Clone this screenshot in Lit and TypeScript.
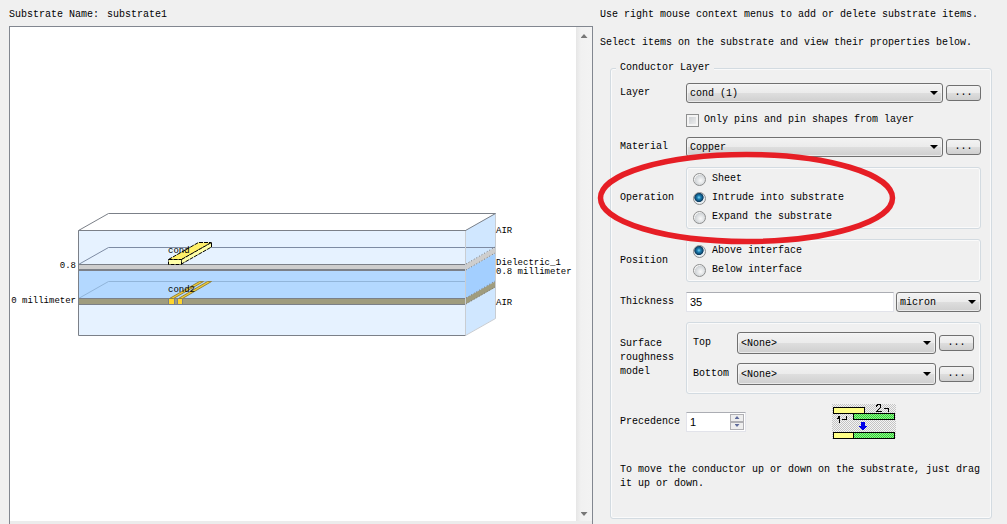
import { LitElement, html, css, svg } from "lit";
import { customElement } from "lit/decorators.js";

@customElement("substrate-view")
class SubstrateView extends LitElement {
  static styles = css`
    :host { display: flex; min-width: 0; min-height: 0; }
    .drawing { display: block; flex: 1; min-width: 0; width: 100%; height: 100%; background: #fff; }
    .label { font: 9px "Liberation Mono", monospace; fill: #000; }
    .end { text-anchor: end; }
    .edge { stroke: #7b8088; fill: none; }
    .back { stroke: #7d8ba3; fill: none; }
    .deep { stroke: #91b5da; fill: none; }
    .side-edge { stroke: #c9cdd2; fill: none; }
    .dots { stroke: #777; stroke-dasharray: 1 2; fill: none; }
    .dash { stroke: #000; stroke-dasharray: 4 1; }
    .strip { fill: #f5ce33; stroke: #93833f; }
  `;

  render() {
    return html`
      <svg class="drawing" viewBox="10 27 566 494" role="img" aria-label="Substrate cross-section">
        ${svg`
        <rect x="78" y="230" width="388" height="34" fill="#e6f2ff"/>
        <rect x="78" y="264" width="388" height="6" fill="#cecece"/>
        <rect x="78" y="270" width="388" height="28" fill="#b3d8ff"/>
        <rect x="78" y="298" width="388" height="6" fill="#9f9c7e"/>
        <rect x="78" y="304" width="388" height="31" fill="#e6f2ff"/>
        <path d="M466 230 496 213V318L466 335Z" fill="#d0e7ff"/>
        <path d="M466 264 496 247V253L466 270Z" fill="#cecece"/>
        <path d="M466 270 496 253V281L466 298Z" fill="#a3cfff"/>
        <path d="M466 298 496 281V287L466 304Z" fill="#9f9c7e"/>
        <path class="edge" d="M78.5 230.5 108.5 213.5H495.5L465.5 230.5"/>
        <path class="back" d="M78.5 264.5 108.5 247.5H495"/>
        <path class="deep" d="M78.5 298.5 108.5 281.5H466"/>
        <path class="edge" d="M466 230.5H78.5V335.5H466M78.5 264.5H466M78.5 298.5H466M78.5 304.5H466"/>
        <path class="edge" stroke-width="2" d="M78 270H466"/>
        <path class="side-edge" d="M465.5 231V335.5L495.5 318.5V214"/>
        <path class="dots" d="M466 264 495 247M466 270 495 253M466 298 495 281M466 304 495 287"/>
        <path d="M168.5 259.5 198.5 242.5H211.5L181.5 259.5Z" fill="#fff06a" class="dash"/>
        <path d="M181.5 259.5 211.5 242.5V247L181.5 264Z" fill="#ffffa8" class="dash"/>
        <path d="M168.5 259.5H181.5V264.5H168.5Z" fill="#ffffa8" class="dash"/>
        <path class="strip" d="M169.5 298.5 199.5 281.5H203.5L173.5 298.5ZM178.5 298.5 207.5 281.5H211.5L182.5 298.5Z"/>
        <path d="M169 299H174V304H169ZM178 299H182V304H178Z" fill="#ffd52e"/>
        <path class="edge" d="M168.5 299V304M174.5 299V304M177.5 299V304M182.5 299V304"/>
        <text class="label" x="168" y="253">cond</text>
        <text class="label" x="168" y="292">cond2</text>
        <text class="label end" x="76" y="268">0.8</text>
        <text class="label end" x="76" y="303">0 millimeter</text>
        <text class="label" x="496" y="233">AIR</text>
        <text class="label" x="496" y="265">Dielectric_1</text>
        <text class="label" x="496" y="274">0.8 millimeter</text>
        <text class="label" x="496" y="305">AIR</text>`}
      </svg>`;
  }
}

@customElement("app-root")
class AppRoot extends LitElement {
  static styles = css`
    * { box-sizing: border-box; }
    button, input, select { font: inherit; color: inherit; margin: 0; border-radius: 0; }
    :host {
      display: grid; grid-template-columns: minmax(0, 1fr) 414px;
      height: 100vh; overflow: hidden; background: #f0f0f0; color: #000;
      font: 10px/14px "Liberation Mono", monospace;
    }
    .left { display: flex; flex-direction: column; min-height: 0; padding: 8px 0 0 9px; }
    .name { display: flex; gap: 8px; height: 18px; }
    .canvas {
      flex: 1; min-height: 0; display: grid; grid-template: minmax(0, 1fr) 3px / minmax(0, 1fr) 16px;
      border: 1px solid #828790; border-bottom: 0; background: #fff;
    }
    .vbar {
      display: flex; flex-direction: column; justify-content: space-between; align-items: center;
      padding: 7px 0 5px; background: linear-gradient(90deg, #e6e6e6, #f1f1f1 30%, #f3f3f3);
    }
    .hbar { grid-column: 1 / -1; background: #ececec; }
    .tri { width: 7px; height: 4px; background: #777; clip-path: polygon(0 0, 100% 0, 50% 100%); }
    .tri.up { clip-path: polygon(50% 0, 100% 100%, 0 100%); }

    .right { padding: 8px 15px 0 7px; }
    .hint { margin: 0 0 14px; white-space: nowrap; }
    .panel {
      margin: -3px 0 0 10px; padding: 8px 10px 27px 9px; min-width: 0;
      border: 1px solid #d3dbe1; border-radius: 3px; box-shadow: inset 0 0 0 1px #fafafa;
    }
    .panel > legend { margin-left: -4px; padding: 0 4px; background: #f0f0f0; }
    .form { display: grid; grid-template-columns: 56px minmax(0, 1fr); gap: 10px; align-items: center; }
    .wide { grid-column: 1 / -1; }
    .line { display: flex; align-items: center; gap: 3px; }
    .grow { flex: 1; }

    .combo { display: grid; min-width: 0; }
    .box {
      grid-area: 1 / 1; appearance: none; width: 100%; height: 20px; padding: 1px 20px 0 3px;
      border: 1px solid #707070; border-radius: 3px;
      background: linear-gradient(#f3f3f3, #ebebeb 50%, #dedede 50%, #cfcfcf);
      box-shadow: inset 0 0 0 1px #f8f8f8aa;
    }
    .rough .box { height: 22px; }
    .arrow {
      grid-area: 1 / 1; justify-self: end; align-self: center; margin-right: 5px;
      width: 8px; height: 4px; background: #000; clip-path: polygon(0 0, 100% 0, 50% 100%);
      pointer-events: none;
    }
    .unit { width: 85px; margin-left: -1px; }

    .more {
      width: 35px; height: 16px; padding: 0; border: 1px solid #707070; border-radius: 3px;
      background: linear-gradient(#f3f3f3, #ebebeb 50%, #dedede 50%, #cfcfcf);
    }
    .group {
      position: relative; display: flex; flex-direction: column; gap: 5px; margin: 0; padding: 4px 6px;
      min-width: 0; border: 1px solid #d3dbe1; border-radius: 3px; box-shadow: inset 0 0 0 1px #fafafa;
    }
    .choice { display: flex; align-items: center; gap: 6px; height: 14px; }
    .check, .radio { appearance: none; width: 13px; height: 13px; border: 1px solid #8e8f8f; }
    .check { background: linear-gradient(135deg, #c4c8cc, #f4f4f4); box-shadow: inset 0 0 0 2px #f4f4f4; }
    .tick { gap: 5px; }
    .radio { border-radius: 50%; background: radial-gradient(circle at 60% 60%, #fafafa, #cfd3d6 60%, #f2f2f2 65%); }
    .radio:checked {
      background: radial-gradient(circle at 45% 40%, #7fd6f5 0, #1d81b5 20%, #0b3a5e 48%, #e8eef2 56%);
    }
    .ring {
      position: absolute; z-index: 1; left: -90px; top: -17px; width: 299px; height: 94px;
      pointer-events: none;
    }
    .text {
      height: 20px; min-width: 0; padding: 0 3px; background: #fff; border: 1px solid #e2e3ea;
      border-top-color: #abadb3; font: 11px/14px "Liberation Sans", sans-serif;
    }
    .rough { gap: 9px; padding: 9px 6px 8px; }
    .rough label { width: 42px; margin-right: -1px; }
    .bottom { display: grid; grid-template-columns: 1fr 64px; padding-right: 85px; align-items: center; }
    .spin {
      display: flex; align-items: center; width: 60px; height: 20px; padding-right: 1px;
      background: #fff; border: 1px solid #e2e3ea; border-top-color: #abadb3;
    }
    .spin .text { flex: 1; height: 18px; border: 0; }
    .steps { display: flex; flex-direction: column; }
    .step {
      display: grid; place-items: center; width: 14px; height: 8px; padding: 0;
      border: 1px solid #b0b0b4; background: #eee;
    }
    .step .tri { width: 5px; height: 3px; background: #5f6b9b; }
    .icon { display: block; width: 64px; height: 35px; }
    .note { margin: 14px 0 0; }
  `;

  combo(id: string, value: string, cls = "grow", label?: string) {
    return html`<span class="combo ${cls}">
      <select class="box" id=${id} aria-label=${label ?? id}><option>${value}</option></select>
      <span class="arrow"></span>
    </span>`;
  }

  more(name: string) {
    return html`<button class="more" type="button" aria-label="Edit ${name}">...</button>`;
  }

  radio(group: string, text: string, on = false) {
    return html`<label class="choice">
      <input class="radio" type="radio" name=${group} ?checked=${on}><span>${text}</span></label>`;
  }

  render() {
    return html`
      <section class="left">
        <div class="name"><span>Substrate Name:</span><span>substrate1</span></div>
        <div class="canvas">
          <substrate-view></substrate-view>
          <div class="vbar"><span class="tri up"></span><span class="tri"></span></div>
          <div class="hbar"></div>
        </div>
      </section>
      <section class="right">
        <p class="hint">Use right mouse context menus to add or delete substrate items.</p>
        <p class="hint">Select items on the substrate and view their properties below.</p>
        <fieldset class="panel">
          <legend>Conductor Layer</legend>
          <div class="form">
            <label for="layer">Layer</label>
            <div class="line">${this.combo("layer", "cond (1)")}${this.more("layer")}</div>

            <span></span>
            <label class="choice tick"><input class="check" type="checkbox"><span>Only pins and pin shapes from layer</span></label>

            <label for="material">Material</label>
            <div class="line">${this.combo("material", "Copper")}${this.more("material")}</div>

            <span>Operation</span>
            <div class="group" role="radiogroup" aria-label="Operation">
              ${this.radio("operation", "Sheet")}
              ${this.radio("operation", "Intrude into substrate", true)}
              ${this.radio("operation", "Expand the substrate")}
              <svg class="ring" viewBox="0 0 299 94" aria-hidden="true">
                <ellipse cx="149.5" cy="47" rx="146" ry="43.5" fill="none" stroke="#e61e25" stroke-width="5.5"/>
              </svg>
            </div>

            <span>Position</span>
            <div class="group" role="radiogroup" aria-label="Position">
              ${this.radio("position", "Above interface", true)}
              ${this.radio("position", "Below interface")}
            </div>

            <label for="thickness">Thickness</label>
            <div class="line">
              <input class="text grow" id="thickness" type="text" value="35">
              ${this.combo("unit", "micron", "unit", "Thickness unit")}
            </div>

            <span>Surface roughness model</span>
            <div class="group rough">
              <div class="line"><label for="top">Top</label>${this.combo("top", "<None>")}${this.more("top")}</div>
              <div class="line"><label for="bottom">Bottom</label>${this.combo("bottom", "<None>")}${this.more("bottom")}</div>
            </div>

            <label for="precedence">Precedence</label>
            <div class="bottom">
              <div class="spin">
                <input class="text" id="precedence" type="text" inputmode="numeric" value="1">
                <div class="steps">
                  <button class="step" type="button" aria-label="Increase"><span class="tri up"></span></button>
                  <button class="step" type="button" aria-label="Decrease"><span class="tri"></span></button>
                </div>
              </div>
              <svg class="icon" viewBox="0 0 64 35" shape-rendering="crispEdges" aria-hidden="true">
                <defs>
                  <pattern id="mesh" width="2" height="2" patternUnits="userSpaceOnUse">
                    <rect width="2" height="2" fill="#f4f4f4"/><path d="M0 0h1v1H0zM1 1h1v1H1z" fill="#c4c4c4"/>
                  </pattern>
                  <pattern id="green" width="2" height="2" patternUnits="userSpaceOnUse">
                    <rect width="2" height="2" fill="#8fee8f"/><path d="M0 0h1v1H0zM1 1h1v1H1z" fill="#35d435"/>
                  </pattern>
                </defs>
                <rect width="64" height="35" fill="url(#mesh)"/>
                <g stroke="#000">
                  <rect x="1.5" y="3.5" width="31" height="6" fill="#ffff87"/>
                  <rect x="21.5" y="9.5" width="41" height="6" fill="url(#green)"/>
                  <rect x="1.5" y="28.5" width="20" height="6" fill="#ffff87"/>
                  <rect x="21.5" y="28.5" width="41" height="6" fill="url(#green)"/>
                  <path fill="none" d="M5 14.5H6.5V12.5H7.5V19M10 15.5H14.5V12M44 2.5V1.5H45V.5H48V1.5H48.5V3.5L44.5 7.5H49.5M52 4.5H56.5V8"/>
                </g>
                <path fill="#0000e8" d="M29 18h4v4h2v1h-1v1h-1v1h-1v1h-2v-1h-1v-1h-1v-1h-1v-1h2z"/>
              </svg>
            </div>
            <p class="note wide">To move the conductor up or down on the substrate, just drag it up or down.</p>
          </div>
        </fieldset>
      </section>`;
  }
}

declare global {
  interface HTMLElementTagNameMap {
    "app-root": AppRoot;
    "substrate-view": SubstrateView;
  }
}
